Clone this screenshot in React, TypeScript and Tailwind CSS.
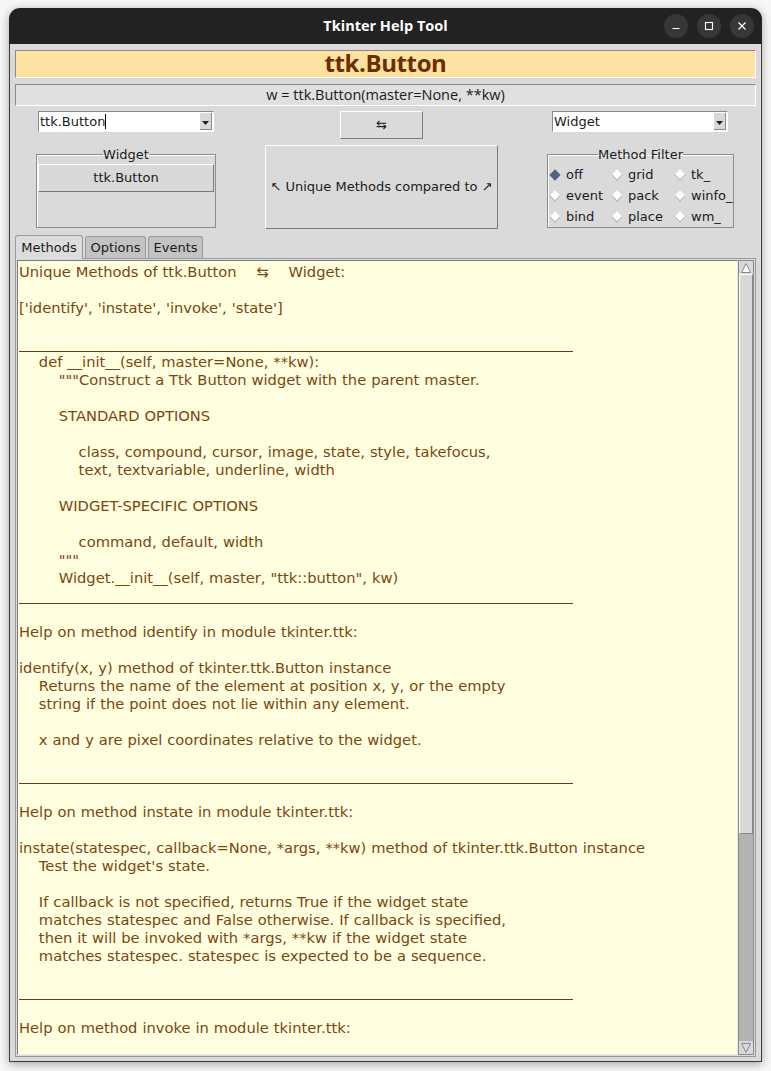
const UI = "font-['DejaVu_Sans',sans-serif] text-[13px] text-[#1a1a1a]";

const lines: string[] = [
  "Unique Methods of ttk.Button    \u21c6    Widget:",
  "",
  "['identify', 'instate', 'invoke', 'state']",
  "",
  "---",
  "    def __init__(self, master=None, **kw):",
  '        """Construct a Ttk Button widget with the parent master.',
  "",
  "        STANDARD OPTIONS",
  "",
  "            class, compound, cursor, image, state, style, takefocus,",
  "            text, textvariable, underline, width",
  "",
  "        WIDGET-SPECIFIC OPTIONS",
  "",
  "            command, default, width",
  '        """',
  '        Widget.__init__(self, master, "ttk::button", kw)',
  "---",
  "",
  "Help on method identify in module tkinter.ttk:",
  "",
  "identify(x, y) method of tkinter.ttk.Button instance",
  "    Returns the name of the element at position x, y, or the empty",
  "    string if the point does not lie within any element.",
  "",
  "    x and y are pixel coordinates relative to the widget.",
  "",
  "---",
  "",
  "Help on method instate in module tkinter.ttk:",
  "",
  "instate(statespec, callback=None, *args, **kw) method of tkinter.ttk.Button instance",
  "    Test the widget's state.",
  "",
  "    If callback is not specified, returns True if the widget state",
  "    matches statespec and False otherwise. If callback is specified,",
  "    then it will be invoked with *args, **kw if the widget state",
  "    matches statespec. statespec is expected to be a sequence.",
  "",
  "---",
  "",
  "Help on method invoke in module tkinter.ttk:",
];

const filters = ["off", "grid", "tk_", "event", "pack", "winfo_", "bind", "place", "wm_"];

function Combo({ value, cursor }: { value: string; cursor?: boolean }) {
  return (
    <div className="w-[176px] h-[21px] flex bg-white border border-t-[#8a8a8a] border-l-[#8a8a8a] border-r-white border-b-white">
      <div className="flex-1 flex items-center pl-[1px] leading-none">
        <span>{value}</span>
        {cursor && <span className="w-px h-[15px] bg-black" />}
      </div>
      <div className="w-[12px] my-[1px] mr-[1px] bg-[#d9d9d9] border-r border-b border-[#8a8a8a] flex items-end justify-center pb-[3px]">
        <svg width="7" height="5" viewBox="0 0 7 5">
          <path d="M0 0h7L3.5 4z" fill="#222" />
        </svg>
      </div>
    </div>
  );
}

function Diamond({ on }: { on?: boolean }) {
  return (
    <div className="w-[12px] h-[12px] flex items-center justify-center shrink-0">
      <div
        className={
          on
            ? "w-[8px] h-[8px] rotate-45 bg-[#4e6682]"
            : "w-[8px] h-[8px] rotate-45 bg-white border-r border-b border-[#b0b0b0]"
        }
      />
    </div>
  );
}

export default function App() {
  return (
    <div className="w-[771px] h-[1071px] bg-[#f7f7f7] pt-[8px] pl-[9px]">
      <div className="w-[753px] h-[1054px] flex flex-col rounded-t-[11px] overflow-hidden shadow-[0_2px_10px_rgba(0,0,0,0.35)]">
        {/* Title bar */}
        <div className="h-[36px] bg-[#222222] grid grid-cols-[1fr_auto_1fr] items-center">
          <div />
          <div className="font-['Open_Sans',sans-serif] font-bold text-[14.5px] text-white">
            Tkinter Help Tool
          </div>
          <div className="flex justify-end gap-[9px] pr-[8px]">
            <div className="w-[24px] h-[24px] rounded-full bg-[#373737] flex items-center justify-center">
              <svg width="10" height="10" viewBox="0 0 10 10">
                <path d="M1.5 7.5h7" stroke="#fff" strokeWidth="1.2" />
              </svg>
            </div>
            <div className="w-[24px] h-[24px] rounded-full bg-[#373737] flex items-center justify-center">
              <svg width="10" height="10" viewBox="0 0 10 10">
                <rect x="1.5" y="1.5" width="7" height="7" fill="none" stroke="#fff" strokeWidth="1.1" />
              </svg>
            </div>
            <div className="w-[24px] h-[24px] rounded-full bg-[#373737] flex items-center justify-center">
              <svg width="10" height="10" viewBox="0 0 10 10">
                <path d="M1.5 1.5l7 7M8.5 1.5l-7 7" stroke="#fff" strokeWidth="1.2" />
              </svg>
            </div>
          </div>
        </div>

        {/* Window body */}
        <div className={`flex-1 flex flex-col bg-[#dadada] border-x border-b border-[#3c3c3c] px-[5px] pt-[6px] ${UI}`}>
          <div className="h-[28px] bg-[#ffe2a2] border border-t-[#8a8a8a] border-l-[#8a8a8a] border-r-white border-b-white flex items-center justify-center pb-[3px]">
            <span className="font-['Open_Sans',sans-serif] font-bold text-[24px] text-[#6a2e00] tracking-[-0.4px] leading-none">
              ttk.Button
            </span>
          </div>
          <div className="mt-[6px] h-[22px] bg-[#e0e0e0] border border-t-[#8a8a8a] border-l-[#8a8a8a] border-r-white border-b-white flex items-center justify-center">
            <span className="font-['Open_Sans',sans-serif] text-[14.5px] leading-none">
              w = ttk.Button(master=None, **kw)
            </span>
          </div>

          {/* combo row */}
          <div className="mt-[5px] h-[28px] flex items-start">
            <div className="ml-[23px]">
              <Combo value="ttk.Button" cursor />
            </div>
            <div className="ml-[126px] w-[83px] h-[28px] bg-[#dadada] border border-t-white border-l-white border-r-[#7a7a7a] border-b-[#7a7a7a] flex items-center justify-center">
              {"\u21c6"}
            </div>
            <div className="ml-[129px]">
              <Combo value="Widget" />
            </div>
          </div>

          {/* frames row */}
          <div className="mt-[6px] h-[84px] flex items-start">
            <fieldset className="ml-[21px] w-[180px] h-[83px] border border-[#8c8c8c] shadow-[inset_1px_1px_0_#fff]">
              <legend className="mx-auto px-0 leading-[19px]">Widget</legend>
              <div className="mx-[1px] h-[28px] bg-[#d9d9d9] border border-t-white border-l-white border-r-[#7a7a7a] border-b-[#7a7a7a] flex items-center justify-center">
                ttk.Button
              </div>
            </fieldset>
            <div className="ml-[49px] w-[233px] h-[84px] bg-[#dadada] border border-t-white border-l-white border-r-[#7a7a7a] border-b-[#7a7a7a] flex items-center justify-center">
              {"\u2196 Unique Methods compared to \u2197"}
            </div>
            <fieldset className="ml-[49px] w-[187px] h-[83px] border border-[#8c8c8c] shadow-[inset_1px_1px_0_#fff]">
              <legend className="mx-auto px-0 leading-[19px]">Method Filter</legend>
              <div className="grid grid-cols-[62px_63px_1fr] pl-[1px]">
                {filters.map((f, i) => (
                  <div key={f} className="h-[21px] flex items-center gap-[5px]">
                    <Diamond on={i === 0} />
                    <span>{f}</span>
                  </div>
                ))}
              </div>
            </fieldset>
          </div>

          {/* tabs */}
          <div className="mt-[6px] h-[23px] flex items-end gap-[2px]">
            <div className="w-[68px] h-[24px] -mb-px bg-[#dcdcdc] border border-b-0 border-[#9a9a9a] rounded-t-[3px] flex items-center justify-center z-10">
              Methods
            </div>
            <div className="w-[61px] h-[22px] bg-[#c3c3c3] border border-b-0 border-[#9a9a9a] rounded-t-[3px] flex items-center justify-center">
              Options
            </div>
            <div className="w-[55px] h-[22px] bg-[#c3c3c3] border border-b-0 border-[#9a9a9a] rounded-t-[3px] flex items-center justify-center">
              Events
            </div>
          </div>

          {/* notebook pane */}
          <div className="h-[799px] border border-[#9a9a9a] bg-[#dcdcdc] flex p-px">
            <div className="flex-1 bg-[#ffffe0] border border-t-[#7a7a7a] border-l-[#7a7a7a] border-r-[#e8e8e8] border-b-[#e8e8e8] overflow-hidden pt-[2px] pl-px">
              <div className="font-['DejaVu_Sans',sans-serif] text-[14.7px] leading-[18px] [word-spacing:0.3px] text-[#7a4610] whitespace-pre">
                {lines.map((l, i) =>
                  l === "---" ? (
                    <div key={i} className="h-[18px] pt-[16px]">
                      <div className="w-[554px] h-px bg-[#6b3a10]" />
                    </div>
                  ) : (
                    <div key={i} className="h-[18px]">
                      {l}
                    </div>
                  )
                )}
              </div>
            </div>
            {/* scrollbar */}
            <div className="w-[16px] flex flex-col bg-[#b3b3b3] border border-[#8a8a8a]">
              <div className="h-[13px] bg-[#d9d9d9] flex items-center justify-center">
                <svg width="10" height="10" viewBox="0 0 10 10">
                  <path d="M5 0.5L9.5 9.5H0.5z" fill="#fff" stroke="#888" strokeWidth="1" />
                </svg>
              </div>
              <div className="h-[560px] bg-[#d9d9d9] border border-t-white border-l-white border-r-[#8a8a8a] border-b-[#8a8a8a]" />
              <div className="flex-1" />
              <div className="h-[13px] bg-[#d9d9d9] flex items-center justify-center">
                <svg width="10" height="10" viewBox="0 0 10 10">
                  <path d="M0.5 0.5H9.5L5 9.5z" fill="#d9d9d9" stroke="#888" strokeWidth="1" />
                </svg>
              </div>
            </div>
          </div>
        </div>
      </div>
    </div>
  );
}
